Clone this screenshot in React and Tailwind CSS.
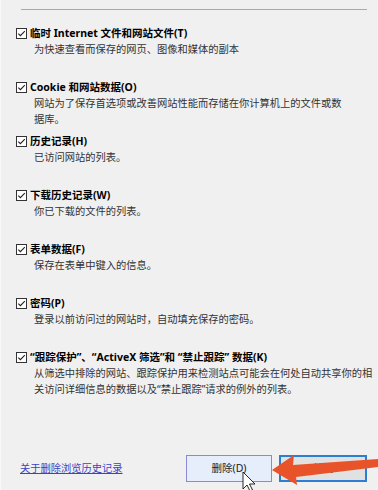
import React from "react";

const groups = [
  {
    label: "临时 Internet 文件和网站文件(T)",
    desc: ["为快速查看而保存的网页、图像和媒体的副本"],
  },
  {
    label: "Cookie 和网站数据(O)",
    desc: ["网站为了保存首选项或改善网站性能而存储在你计算机上的文件或数", "据库。"],
  },
  { label: "历史记录(H)", desc: ["已访问网站的列表。"] },
  { label: "下载历史记录(W)", desc: ["你已下载的文件的列表。"] },
  { label: "表单数据(F)", desc: ["保存在表单中键入的信息。"] },
  { label: "密码(P)", desc: ["登录以前访问过的网站时，自动填充保存的密码。"] },
  {
    label: "“跟踪保护”、“ActiveX 筛选”和 “禁止跟踪” 数据(K)",
    desc: [
      "从筛选中排除的网站、跟踪保护用来检测站点可能会在何处自动共享你的相",
      "关访问详细信息的数据以及“禁止跟踪”请求的例外的列表。",
    ],
  },
];

function Check() {
  return (
    <svg width="11" height="11" viewBox="0 0 11 11" className="shrink-0">
      <rect x="0.5" y="0.5" width="10" height="10" fill="#fff" stroke="#333" strokeWidth="1" />
      <path d="M2.3 5.6 L4.4 7.7 L8.8 3.2" fill="none" stroke="#222" strokeWidth="1.1" />
    </svg>
  );
}

export default function App() {
  const font = {
    fontFamily: '"Noto Sans", "Noto Sans CJK SC", sans-serif',
  };
  return (
    <div
      className="relative w-[378px] h-[490px] overflow-hidden bg-[#f0f0f0] border-l border-l-[#f8f8f8]"
      style={font}
    >
      <div className="ml-[20px] mt-[9px] w-[346px] h-px bg-[#a9a9a9]" />
      <div className="mt-[15px] pl-[15px]">
        {groups.map((g, i) => (
          <div key={i} className="h-[54px]">
            <div className="flex items-center gap-[3px] h-[16px]">
              <Check />
              <span className="text-[10.5px] leading-[16px] font-bold text-black whitespace-nowrap">
                {g.label}
              </span>
            </div>
            <div className="pl-[18px] text-[10.25px] leading-[16px] text-[#333] whitespace-nowrap">
              {g.desc.map((d, j) => (
                <div key={j}>{d}</div>
              ))}
            </div>
          </div>
        ))}
      </div>
      <div className="mt-[52px] flex items-center pl-[19px] pr-[11px]">
        <span className="text-[10.25px] text-[#3a44c4] underline whitespace-nowrap">
          关于删除浏览历史记录
        </span>
        <div className="ml-auto flex gap-[7px]">
          <div className="w-[86px] h-[27px] flex items-center justify-center border border-[#8a8ad4] bg-[#e5eefa] text-[10.5px] text-[#222]">
            删除(D)
          </div>
          <div className="w-[88px] h-[27px] flex items-center justify-center border-2 border-[#2a7fd4] bg-[#e1e1e1] text-[10.5px] text-[#222]">
            关闭
          </div>
        </div>
      </div>
      <svg
        className="absolute left-0 top-0 pointer-events-none"
        width="378"
        height="490"
        viewBox="0 0 378 490"
      >
        <path
          d="M242 472 L242 489 L246 485 L249 491 L251.5 490 L248.5 484 L254 484 Z"
          fill="#fff"
          stroke="#111"
          strokeWidth="0.9"
        />
        <path
          d="M271 470 L293 455 L292 465 L378 459 L378 467 L295 477 L296 485 Z"
          fill="#e9532a"
        />
      </svg>
    </div>
  );
}
